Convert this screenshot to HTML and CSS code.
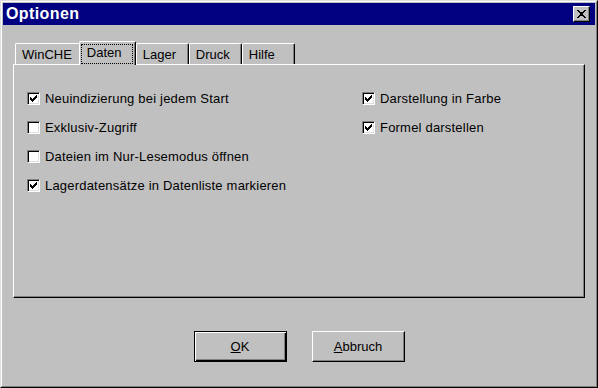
FILE: index.html
```html
<!DOCTYPE html>
<html>
<head>
    <title>Optionen</title>
    <link rel="stylesheet" href="styles.css">
</head>
<body>
    <div class="window">
        <div class="frame">
            <div class="title-bar">
                <span class="title">Optionen</span>
                <button class="close-btn" type="button">
                    <svg width="8" height="7" viewBox="0 0 8 7" shape-rendering="crispEdges"><path d="M0 0h2v1H0zM6 0h2v1H6zM1 1h2v1H1zM5 1h2v1H5zM2 2h4v1H2zM3 3h2v1H3zM2 4h4v1H2zM1 5h2v1H1zM5 5h2v1H5zM0 6h2v1H0zM6 6h2v1H6z"/></svg>
                </button>
            </div>

            <div class="content">
                <div class="tabs">
                    <div class="tab">WinCHE</div>
                    <div class="tab active"><span class="focus">Daten</span></div>
                    <div class="tab">Lager</div>
                    <div class="tab">Druck</div>
                    <div class="tab">Hilfe</div>
                </div>

                <div class="panel">
                    <div class="column">
                        <label class="check-row">
                            <span class="check"><svg width="7" height="7" viewBox="0 0 7 7" shape-rendering="crispEdges"><path d="M6 0h1v1H6zM5 1h2v1H5zM0 2h1v1H0zM4 2h3v1H4zM0 3h2v1H0zM3 3h3v1H3zM0 4h5v1H0zM1 5h3v1H1zM2 6h1v1H2z"/></svg></span>
                            Neuindizierung bei jedem Start
                        </label>
                        <label class="check-row"><span class="check"></span>Exklusiv-Zugriff</label>
                        <label class="check-row"><span class="check"></span>Dateien im Nur-Lesemodus öffnen</label>
                        <label class="check-row">
                            <span class="check"><svg width="7" height="7" viewBox="0 0 7 7" shape-rendering="crispEdges"><path d="M6 0h1v1H6zM5 1h2v1H5zM0 2h1v1H0zM4 2h3v1H4zM0 3h2v1H0zM3 3h3v1H3zM0 4h5v1H0zM1 5h3v1H1zM2 6h1v1H2z"/></svg></span>
                            Lagerdatensätze in Datenliste markieren
                        </label>
                    </div>
                    <div class="column">
                        <label class="check-row">
                            <span class="check"><svg width="7" height="7" viewBox="0 0 7 7" shape-rendering="crispEdges"><path d="M6 0h1v1H6zM5 1h2v1H5zM0 2h1v1H0zM4 2h3v1H4zM0 3h2v1H0zM3 3h3v1H3zM0 4h5v1H0zM1 5h3v1H1zM2 6h1v1H2z"/></svg></span>
                            Darstellung in Farbe
                        </label>
                        <label class="check-row">
                            <span class="check"><svg width="7" height="7" viewBox="0 0 7 7" shape-rendering="crispEdges"><path d="M6 0h1v1H6zM5 1h2v1H5zM0 2h1v1H0zM4 2h3v1H4zM0 3h2v1H0zM3 3h3v1H3zM0 4h5v1H0zM1 5h3v1H1zM2 6h1v1H2z"/></svg></span>
                            Formel darstellen
                        </label>
                    </div>
                </div>
            </div>

            <div class="buttons">
                <button class="btn default" type="button"><u>O</u>K</button>
                <button class="btn" type="button"><u>A</u>bbruch</button>
            </div>
        </div>
    </div>
</body>
</html>
```

FILE: styles.css
```css
body {
    margin: 0;                                     /* 去除默认外边距 */
    font-family: "Liberation Sans", Arial, sans-serif;
    font-size: 13px;
    color: #000;
}

/* ================= 窗口外框 ================= */
.window {
    width: 598px;
    height: 388px;
    box-sizing: border-box;
    border: 1px solid;
    border-color: #dfdfdf #000 #000 #dfdfdf;       /* 外层立体边框 */
    background-color: #c0c0c0;                     /* 经典灰色背景 */
}

.frame {
    height: 100%;
    box-sizing: border-box;
    border: 1px solid;
    border-color: #fff #808080 #808080 #fff;       /* 内层立体边框 */
    padding: 1px;
    display: flex;
    flex-direction: column;
}

/* 标题栏 */
.title-bar {
    height: 22px;
    background-color: #000080;                     /* 深蓝色标题栏 */
    display: flex;
    align-items: center;
    justify-content: space-between;
    padding: 0 5px 0 3px;
}

.title {
    color: #fff;
    font-weight: bold;
    font-size: 16px;
    letter-spacing: 0.4px;
    line-height: 22px;
}

/* 关闭按钮 */
.close-btn {
    width: 17px;
    height: 16px;
    padding: 0 1px 0 0;
    background-color: #c0c0c0;
    border: 1px solid;
    border-color: #fff #000 #000 #fff;
    box-shadow: inset -1px -1px #808080;
    display: flex;
    align-items: center;
    justify-content: center;
}

.close-btn svg {
    display: block;
    width: 9px;
    height: 8px;
}

/* ================= 选项卡 ================= */
.content {
    padding: 16px 0 0 10px;                        /* 选项卡区域的位置 */
}

.tabs {
    display: flex;
    align-items: flex-end;
    margin-left: 2px;
}

.tab {
    height: 21px;
    min-width: 53px;
    box-sizing: border-box;
    padding: 3px 8px 0 6px;
    border-top: 1px solid #fff;
    border-left: 1px solid #fff;
    border-right: 1px solid #000;
    border-radius: 2px 2px 0 0;
    box-shadow: inset -1px 0 #808080;
    line-height: 15px;
    white-space: nowrap;
}

/* 当前选中的选项卡 */
.tab.active {
    width: 57px;
    height: 24px;
    margin-left: -2px;
    margin-bottom: -1px;                           /* 盖住面板上边框 */
    padding: 2px 2px 0 1px;
    position: relative;
    z-index: 1;
    background-color: #c0c0c0;
}

.focus {
    display: block;
    height: 20px;
    box-sizing: border-box;
    border: 1px dotted #000;                       /* 焦点虚线框 */
    padding-left: 5px;
    line-height: 15px;
}

/* 选项卡面板 */
.panel {
    width: 572px;
    height: 234px;
    box-sizing: border-box;
    border: 1px solid;
    border-color: #fff #000 #000 #fff;
    box-shadow: inset -1px -1px #808080;
    padding: 27px 0 0 13px;
    display: grid;
    grid-template-columns: 335px 1fr;              /* 左右两列复选框 */
}

.column {
    display: flex;
    flex-direction: column;
    gap: 16px;
}

/* ================= 复选框 ================= */
.check-row {
    display: flex;
    align-items: center;
    gap: 5px;
    height: 13px;
    line-height: 15px;
    letter-spacing: 0.2px;
    white-space: nowrap;
}

.check {
    width: 13px;
    height: 13px;
    flex: none;
    box-sizing: border-box;
    padding: 2px;                                  /* 勾选标记的位置 */
    border: 1px solid;
    border-color: #808080 #fff #fff #808080;
    box-shadow: inset 1px 1px #000, inset -1px -1px #dfdfdf;
    background-color: #fff;                        /* 白色底 */
}

.check svg {
    display: block;
}

/* ================= 底部按钮 ================= */
.buttons {
    display: flex;
    justify-content: center;
    gap: 25px;
    margin-top: 33px;
}

.btn {
    width: 93px;
    height: 31px;
    padding: 0;
    font: inherit;
    color: #000;
    background-color: #c0c0c0;
    border: 1px solid;
    border-color: #fff #000 #000 #fff;
    box-shadow: inset -1px -1px #808080;
}

/* 默认按钮：黑色外框 */
.btn.default {
    border-color: #000;
    box-shadow: inset 1px 1px #fff, inset -1px -1px #000, inset -2px -2px #808080;
}

.btn u {
    text-decoration-thickness: 1px;
}
```
